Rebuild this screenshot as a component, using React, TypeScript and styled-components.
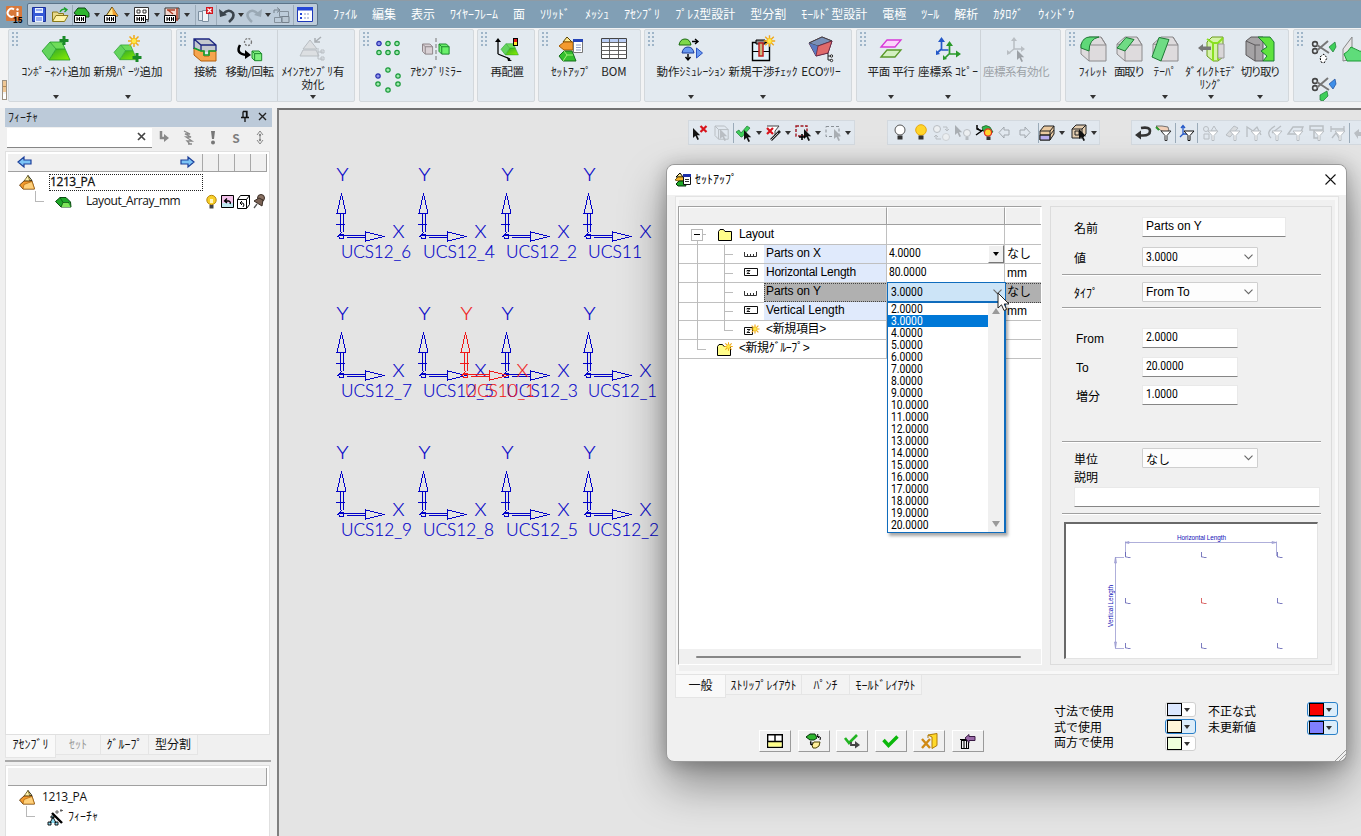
import React from "react";
import styled, { createGlobalStyle, css } from "styled-components";

const UI = `"Open Sans", "Noto Sans CJK JP", sans-serif`;
const CJK = `"Noto Sans CJK JP", "Open Sans", sans-serif`;
const GOTHIC = `"Liberation Sans", "Noto Sans CJK JP", sans-serif`;

const Global = createGlobalStyle`
  * { box-sizing: border-box; }
  html, body { margin: 0; padding: 0; overflow: hidden; }
  body { font-family: ${CJK}; font-size: 12px; color: #1e1e1e; background: #f0f0f0; }
  svg { display: block; flex: none; overflow: visible; }
`;

/* ---------- icons ---------- */

type IconName = keyof typeof art;

const Funnel = ({ c = "#333", x = 5, y = 6 }: { c?: string; x?: number; y?: number }) => (
  <path d={`M${x} ${y}h10l-4 4.500v5h-2v-5z`} fill="#fff" stroke={c} />
);
const Cursor = ({ x, y, c = "#111" }: { x: number; y: number; c?: string }) => (
  <path d={`M${x} ${y}v10l2.400-2.200 2 4.200 1.600-.8-2-4h3.200z`} fill={c} />
);
const Hist = () => (
  <>
    <path d="M.5 8.500h11v7H.5z" fill="#fff" stroke="#000" />
    <path d="M3 10v4M3 12h2M5.500 10v4M7.500 10v4M7.500 12h2M9.500 10v4" stroke="#000" fill="none" />
  </>
);
const Sun = ({ x, y, s = 1 }: { x: number; y: number; s?: number }) => (
  <g transform={`translate(${x} ${y}) scale(${s})`}>
    <path d="M0-6V6M-6 0H6M-4.500-4.500l9 9M-4.500 4.500l9-9" stroke="#f0a81c" strokeWidth="1.500" />
    <circle r="2.700" fill="#ffe94a" stroke="#f5c320" />
  </g>
);
const Block = () => (
  <>
    <defs>
      <linearGradient id="blockFront" x1="0" y1="0" x2="1" y2="1">
        <stop offset="0" stopColor="#2ea82a" />
        <stop offset="1" stopColor="#8cf000" />
      </linearGradient>
    </defs>
    <path d="M8 6h12l3 7h-9z" fill="#6fdc5a" />
    <path d="M14 13h9l5 11H7z" fill="url(#blockFront)" />
    <path d="M0 15 8 6l6 7-7 11z" fill="#63d45c" />
    <path d="M0 15 8 6h12l8 18H7zM8 6l6 7-7 11M14 13h9" fill="none" stroke="#1e9a26" strokeWidth=".8" />
  </>
);
const Cube = ({ x = 0, y = 0, s = 1, f = "#5be05b", e = "#1c8a2c" }: { x?: number; y?: number; s?: number; f?: string; e?: string }) => (
  <g transform={`translate(${x} ${y}) scale(${s})`}>
    <path d="M0 0h8l3 3v8H3L0 8z" fill={f} stroke={e} strokeWidth={1 / s} />
    <path d="M0 0l3 3h8M3 3v8" fill="none" stroke={e} strokeWidth={1 / s} />
  </g>
);
const Solid = ({ children }: { children?: React.ReactNode }) => (
  <>
    <path d="M1 8 9 1h12l5 8v16H9L1 18z" fill="#dedbdd" stroke="#8c8a8c" />
    <path d="M9 9h17M9 9v16M9 9 1 8M21 1l5 8" stroke="#8c8a8c" fill="none" />
    {children}
  </>
);
const Scissors = () => (
  <g fill="none">
    <circle cx="3" cy="4" r="2.400" stroke="#444" strokeWidth="1.600" />
    <circle cx="3" cy="11" r="2.400" stroke="#444" strokeWidth="1.600" />
    <path d="M5 5l12 8M5 10.500 16 1" stroke="#777" strokeWidth="2" />
  </g>
);
const Pyramid = () => (
  <>
    <path d="M9 .5l4 5-7 1z" fill="#ffef8a" stroke="#000" strokeWidth=".8" />
    <path d="M9 .5l-4 5.500 6 .5z" fill="#fff3b0" stroke="#5a4a10" strokeWidth=".7" />
    <path d="M.5 10l4.500-4h8l2.500 8H4z" fill="#f39a2e" stroke="#4a2800" strokeWidth=".8" />
    <path d="M5 9.500l8-3 2.500 7.500H4z" fill="#ffd07a" stroke="#a55a00" strokeWidth=".6" />
  </>
);
const SmallBlock = () => (
  <>
    <path d="M.5 7.500 5 3.500h6l4.500 4.500.5 5H6z" fill="#1ea828" stroke="#0a4a10" />
    <path d="M8 8.500h5l2.500 4.500H6.500z" fill="#7fe35a" />
    <path d="M5 3.500l3 5-2 4.500M8 8.500h6" stroke="#0a4a10" fill="none" strokeWidth=".7" />
  </>
);
const BoxFeature = () => (
  <>
    <path d="M1 6 5 1h10v8l-4 6H1z" fill="#e9c9a0" stroke="#222" />
    <path d="M1 10h10v5H1z" fill="#b9aef0" stroke="#222" />
    <path d="M1 6h10v9M11 6l4-5M1 10h10l4-5" stroke="#222" fill="none" />
  </>
);
const g = "#b9bec3";

const art = {
  app: [18, 18, <><rect x="0" y="0" width="16" height="15" rx="1" fill="#d8783a" /><path d="M8 3.500A4 4 0 1 0 8 10M11.500 6v4" stroke="#fff" strokeWidth="2" fill="none" /><circle cx="11.500" cy="3.500" r="1.200" fill="#fff" /><text x="7" y="17" fontSize="8.500" fontWeight="700" fontFamily="Liberation Sans">15</text></>],
  save: [14, 15, <><path d="M.5.500h13v14H.5z" fill="#3559d6" stroke="#1b2f9a" /><rect x="3" y="1" width="8" height="5" fill="#e8f0ff" /><rect x="3" y="9" width="8" height="6" fill="#e8f0ff" /><path d="M4 3h6M4 11h6M4 13h6" stroke="#4a6ae0" /></>],
  open: [17, 16, <><path d="M.5 14V5h5l1 1.500h5V9" fill="#e8d98a" stroke="#8a7a1a" /><path d="M.5 14.500 4 8.500h12l-3.500 6z" fill="#fff3a8" stroke="#8a7a1a" /><path d="M8 5q2-4 6-2.500M12 .5l3 2-2.500 2.500" stroke="#1aa02a" fill="none" strokeWidth="1.300" /></>],
  histA: [16, 16, <><path d="M0 6 4 1h7l4 5v4H5z" fill="#2eb52e" stroke="#0b4a12" /><Hist /></>],
  histB: [16, 16, <><path d="M8 0l6 9H2z" fill="#ffe58a" stroke="#5a4200" /><path d="M8 0l6 9H9z" fill="#f0a030" /><Hist /></>],
  histC: [16, 16, <><path d="M.5.500h14v12H.5z" fill="#fff" stroke="#333" /><path d="M3 3h3v3H3zM9 3h3v3H9zM14 12v3" stroke="#333" fill="none" /><Hist /></>],
  histD: [16, 16, <><path d="M1 1h14v11H1z" fill="#f3d9d0" stroke="#333" /><path d="M3 3h8M4 3l5 4M13 1v13" stroke="#b0412a" fill="none" strokeWidth="1.500" /><Hist /></>],
  copyX: [17, 17, <><path d="M1.500 5.500h6v9h-6z" fill="#dfe8f0" stroke="#7c8fa0" /><path d="M5.500 4.500h6v11h-6z" fill="#eef3f7" stroke="#7c8fa0" /><rect x="9" y="1" width="7" height="7" fill="#d4141c" /><path d="M10.500 2.500l4 4M14.500 2.500l-4 4" stroke="#fff" strokeWidth="1.200" /></>],
  undo: [16, 16, <><path d="M4 7q6-6 10-1 2 4-4 9" fill="none" stroke="#3b444c" strokeWidth="2.600" /><path d="M0 2l1 8 7-2z" fill="#3b444c" /></>],
  redo: [16, 16, <><path d="M12 7Q6 1 2 6q-2 4 4 9" fill="none" stroke="#9aa8b4" strokeWidth="2.600" /><path d="M16 2l-1 8-7-2z" fill="#9aa8b4" /></>],
  swap: [17, 16, <><path d="M6.500 4.500h9v5h-9zM1.500 10.500h7v5h-7z" fill="none" stroke="#84909b" /><path d="M9 9.500h7v6H9z" fill="#b9c6d2" stroke="#75818c" /><path d="M1 6V3h5M4 .5l3 2.500-3 2.500" stroke="#75818c" fill="none" /></>],
  list: [16, 15, <><path d="M.5.500h15v14H.5z" fill="#fff" stroke="#1d38b8" /><path d="M0 0h16v3.500H0z" fill="#2345d6" /><path d="M3 7h2M3 11h2" stroke="#2345d6" strokeWidth="2" /><path d="M7 7h6M7 11h6" stroke="#8896c8" strokeDasharray="2 1" /></>],

  addComp: [28, 26, <><Block /><path d="M22 0v9M17.500 4.500h9" stroke="#1a8a28" strokeWidth="3" /></>],
  newPart: [28, 26, <><g transform="translate(0 4) scale(.82)"><Block /></g><Sun x={20} y={5} /><path d="M23 17v9M18.500 21.500h9" stroke="#1a8a28" strokeWidth="3" /></>],
  connect: [24, 25, <><path d="M1 2h15l7 6v7H8L1 11z" fill="#c4c8ce" /><path d="M1 11l7 3h3v5h5v-5h7v10H8l-7-6z" fill="#f6a54e" stroke="#b45c08" /><path d="M1 12V2h15l7 6v6M1 2l7 6h15M8 8v6" stroke="#1b2580" fill="none" strokeWidth="1.300" /><path d="M1 11l7 3h3v4h5v-4h7" stroke="#12a030" strokeWidth="1.600" fill="none" /></>],
  move: [25, 25, <><circle cx="11" cy="5" r="3.500" fill="none" stroke="#777" strokeWidth="1.300" strokeDasharray="2 1.300" /><path d="M3 8Q-2 17 10 18" stroke="#000" strokeWidth="2.500" fill="none" /><path d="M8 13l6 5-6 4z" /><Cube x={15} y={14} s={0.880} f="#7ef07e" /></>],
  mainAsm: [26, 26, <><path d="M3 13 10 4l7 9zM0 20l3-6h13l3 6z" fill="#dcdfe2" stroke={g} /><path d="M21 1l-6 5M15 2v4h5" stroke="#a9aeb3" strokeWidth="1.500" fill="none" /><path d="M18 12v11h5M18 16h5M21 14h3v3h-3zM21 21h3v3h-3z" stroke={g} fill="none" /></>],
  gridPat: [24, 16, <>{[0, 1, 2].map(i => [0, 1].map(j => <circle key={`${i}${j}`} cx={3 + i * 9} cy={3.500 + j * 9} r="2.200" fill={i + j ? "#9fe8ae" : "#8f94e8"} stroke={i + j ? "#1a9a3a" : "#2a30b0"} strokeWidth="1.200" />))}</>],
  circPat: [24, 26, <>{[[12, 3], [22, 9], [22, 17], [12, 23], [2, 17], [2, 9]].map(([x, y], i) => <circle key={i} cx={x} cy={y} r="2.200" fill={i < 5 ? "#9fe8ae" : "#8f94e8"} stroke={i < 5 ? "#1a9a3a" : "#2a30b0"} strokeWidth="1.200" />)}</>],
  mirror: [28, 26, <><Cube x={.5} y={8} s={0.920} f="#d8d0d4" e="#8f868a" /><Cube x={17} y={8} s={0.920} f="#6af06a" /><path d="M14 2v22" stroke="#777" strokeDasharray="4 2" /></>],
  relocate: [24, 25, <><path d="M3 17V3M3 17l12 5" stroke="#000" fill="none" strokeWidth="1.300" /><path d="M0 5l3-4 3 4zM13 24l-1-4 5 4z" /><g transform="translate(6 3) scale(.62)"><Block /></g><rect x="18.500" y="1.500" width="4" height="7" fill="#ffe62a" stroke="#000" /><rect x="19" y="2" width="3" height="3" fill="#e01818" /></>],
  setup: [25, 26, <><path d="M8 1l5 5H4z" fill="#ffe98a" stroke="#5a4200" /><path d="M0 10l5-4h9v8H5z" fill="#f39a2e" stroke="#a55a00" /><path d="M0 20l5-5h8l4 10H4z" fill="#35c02e" stroke="#14701c" /><path d="M5 15l3 4-4 6M8 19h6" stroke="#a5f07a" fill="none" /><path d="M14.500 3.500h9v13h-9z" fill="#fff" stroke="#777" /><path d="M14 3h10v3H14z" fill="#2545b8" /><path d="M17 9h5M17 11.500h5M17 14h5" stroke="#8fa0c8" /></>],
  bom: [26, 22, <><path d="M.5.500h25v20H.5z" fill="#fff" stroke="#444" /><path d="M1 1h24v3.500H1z" fill="#b9cdf5" /><path d="M0 4.500h26M0 8.500h26M0 12.500h26M0 16.500h26M8.500 0v21M17.500 0v21" stroke="#555" strokeWidth=".9" /></>],
  motion: [26, 24, <><path d="M1 8q1-6 6-6t6 6z" fill="#7fd84a" stroke="#1a6a10" /><path d="M14 4.500h5M17 2l3 2.500L17 7" stroke="#000" fill="none" strokeWidth="1.400" /><path d="M4 16q1-6 6-6t6 6z" fill="#6a9af0" stroke="#1a3a9a" /><path d="M18.500 11l6 5-6 5z" fill="#6a9af0" stroke="#2a50c0" /><path d="M10 17v5M7.500 20l2.500 3 2.500-3" stroke="#000" fill="none" strokeWidth="1.400" /></>],
  interfere: [25, 26, <><path d="M1.500 6.500h17v18h-17z" fill="#dff2fb" stroke="#000" strokeWidth="1.400" /><path d="M1 15.500h17.500M5 4h9v4H5z" fill="#888" stroke="#000" /><path d="M8 7h4v13H8z" fill="#c8b880" stroke="#c02020" strokeWidth="1.500" /><Sun x={18.500} y={5} s={0.950} /></>],
  eco: [26, 26, <><path d="M1 7 14 1l10 4-4 12-12 3z" fill="#c8506a" stroke="#5a2040" /><path d="M1 7 14 1l10 4-14 5z" fill="#7a90b8" stroke="#444" /><path d="M10 10l-2 10L1 7z" fill="#5a7ac0" /><path d="M10 10 24 5l-4 12-12 3z" fill="#e06a6a" stroke="#5a2040" strokeWidth=".7" /><path d="M20 17v7h4M20 20h4" stroke="#222" fill="none" /><circle cx="23.500" cy="20" r="1.200" fill="#fff" stroke="#222" /><circle cx="23.500" cy="24.500" r="1.200" fill="#fff" stroke="#222" /></>],
  planes: [22, 22, <><path d="M1 9 7 2h14l-6 7z" fill="#fbd3fb" stroke="#d838d8" strokeWidth="1.300" /><path d="M1 19l6-7h14l-6 7z" fill="#d3f0c0" stroke="#5a9a2a" strokeWidth="1.300" /></>],
  csCopy: [26, 24, <><path d="M6.500 13V2M6.500 13h7M6.500 12 2 16" stroke="#2458c8" strokeWidth="1.700" fill="none" /><path d="M3 5l3.500-5L10 5zM1 18v-5l4 4z" fill="#2458c8" /><path d="M14.500 17V7M14.500 17h9M14.500 16.500 10 21" stroke="#2a9a2a" strokeWidth="1.700" fill="none" /><path d="M11 9l3.500-5L18 9zM21 13.500l5 3.500-5 3.500zM8 23v-5l4 4z" fill="#2a9a2a" /></>],
  csAct: [20, 25, <><path d="M8 12V2M8 12h9M8 12l-5 4" stroke={g} strokeWidth="1.500" fill="none" /><path d="M5 4l3-4 3 4zM15 9l4 3-4 3zM1 18v-5l4 3z" fill={g} /><Cursor x={11} y={13} c="#9ca1a6" /></>],
  fillet: [27, 26, <Solid><path d="M1 9Q3 1 10 1h9Q9 3 9 15L1 12z" fill="#5fd878" stroke="#1d7a34" /></Solid>],
  chamfer: [27, 26, <Solid><path d="M1 12 10 1.500l8 2L9 15z" fill="#6fdc84" stroke="#1d7a34" /></Solid>],
  taper: [27, 26, <Solid><path d="M0 21 7 1.500l10 2L9 25z" fill="#6fdc84" stroke="#1d7a34" /></Solid>],
  direct: [26, 26, <><path d="M9 6l5-5h11v20l-5 4h-5l-6-5z" fill="#d4f3a8" stroke="#6a9a1a" /><path d="M9 3l6 4h5l5-5M15 7v18M20 7v17" stroke="#8ae020" fill="none" strokeWidth="2" /><path d="M20 8h6v14h-6z" fill="#d9d6d8" stroke="#999" /><path d="M0 12l5-4v2.500h8v3.500H5V16z" fill="#777" /></>],
  cut: [28, 26, <><path d="M0 5 5 1h12v24H9L0 19z" fill="#a5a3a5" stroke="#5c5a5c" /><path d="M0 5l9 4v16M9 9h5" stroke="#5c5a5c" fill="none" /><path d="M12 1h12l4 5v19H17l4-5-6-5 6-4-4-5z" fill="#5fe33e" stroke="#1d7a34" /></>],
  sciA: [25, 26, <><Scissors /><path d="M17 7l6-5 1 5-3 5z" fill="#3fcf5a" stroke="#1d7a34" strokeWidth=".7" /><path d="M8 17l4-3 3 4-3 5-3-1z" fill="#fff" stroke="#000" strokeDasharray="2 1.500" /></>],
  sciB: [25, 26, <><Scissors /><path d="M17 7l6-5 1 5-3 5z" fill="#3f8fe8" stroke="#1d4a9a" strokeWidth=".7" /><path d="M8 18l7-4 1 5-5 5-3-1z" fill="#3fcf5a" stroke="#1d7a34" strokeWidth=".7" /></>],
  surf: [27, 26, <><path d="M1 13 10 1v22l-9 2z" fill="#e6e4e6" stroke="#888" /><path d="M2 18q4-2 7-7 8 5 18 6l-3 8H5z" fill="#5fdc7a" stroke="#1d9a34" /></>],

  curX: [16, 16, <><Cursor x={1} y={3} /><path d="M8.500 1l6 6M14.500 1l-6 6" stroke="#d8141c" strokeWidth="2.200" /></>],
  cubeSel: [15, 16, <><Cube x={1} y={1} s={1.200} f="none" e={g} /><Cursor x={6} y={4} c={g} /></>],
  checkSel: [16, 16, <><path d="M0 7l3-2 2 3 6-7 3 2-8 9H5z" fill="#3fcf5a" stroke="#1d7a34" strokeWidth=".7" /><Cursor x={8} y={5} /></>],
  pickX: [16, 16, <><path d="M1 1h12l-4 5v4" fill="#fff" stroke="#444" /><path d="M1 3l6 6M7 3l-6 6" stroke="#d8141c" strokeWidth="2.200" /><path d="M5 15l9-9" stroke="#222" strokeWidth="2.600" /><path d="M5 15l7-7" stroke="#bbb" /></>],
  boxPlus: [17, 16, <><path d="M1 1h11v10H1z" fill="none" stroke="#a01822" strokeWidth="1.400" strokeDasharray="3 1.500" /><Cursor x={9} y={4} /><path d="M7 9v6M4 12h6" stroke="#000" strokeWidth="1.600" /></>],
  boxSel: [16, 16, <><path d="M1 1.500h13v10H1z" fill="none" stroke="#8a9096" strokeDasharray="3 2" /><Cursor x={9} y={4} c="#a9aeb3" /></>],
  bulbOff: [12, 17, <><circle cx="6" cy="6" r="5" fill="#fff" stroke="#555" /><path d="M3.500 11.500h5v4h-5z" fill="#333" /></>],
  bulbOn: [12, 17, <><circle cx="6" cy="6" r="5.300" fill="#ffd52a" stroke="#e8a80c" /><path d="M3.500 11.500h5v4h-5z" fill="#333" /></>],
  bulbSwap: [17, 16, <><circle cx="4" cy="4" r="3.500" fill="#eceff1" stroke={g} /><circle cx="13" cy="12" r="3.500" fill="#eceff1" stroke="#ced2d6" /><path d="M10 2h4v4M12 4l2 2 2-2M8 14H3v-4M1 12l2-2 2 2" stroke={g} fill="none" /></>],
  bulbCur: [16, 16, <><Cursor x={0} y={0} c="#a9aeb3" /><circle cx="12" cy="8" r="3.500" fill="#eceff1" stroke={g} /><path d="M10.500 12h3v3h-3z" fill={g} /></>],
  bulbCol: [17, 17, <><path d="M6 3q4-3 8 0l3 5-4 2-6-3z" fill="#2eb54a" stroke="#0b4a12" strokeWidth=".6" /><circle cx="12" cy="8.500" r="3.600" fill="#ffd52a" stroke="#e03020" strokeWidth="1.300" /><path d="M10.500 12.500h4v3.500h-4z" fill="#333" /><path d="M1 1v4l5 2M0 11l7-5M1 5h2" stroke="#000" fill="none" strokeWidth="1.500" /></>],
  left: [12, 13, <path d="M1 6.500 6 1v3h5v5H6v3z" fill="none" stroke="#a2a8ae" />],
  right: [12, 13, <path d="M11 6.500 6 1v3H1v5h5v3z" fill="none" stroke="#a2a8ae" />],
  boxF: [16, 16, <BoxFeature />],
  boxC: [17, 17, <><path d="M1 5 5 1h10v9l-4 4H1z" fill="#e3cdb0" stroke="#222" /><path d="M1 5h10v9M11 5l4-4" stroke="#222" fill="none" /><path d="M4 7h4v4H4z" fill="none" stroke="#222" /><Cursor x={8} y={5} /></>],
  ret: [16, 14, <><path d="M4 9.500h4q7 0 7-4.500T6 2" fill="none" stroke="#333" strokeWidth="2.600" /><path d="M0 9l6-4.500v9z" fill="#333" /></>],
  fHand: [16, 16, <><path d="M0 1h6l6 1 1 4-5 1-4-2z" fill="#f2d0b8" stroke="#555" strokeWidth=".8" /><path d="M0 2l3 3" stroke="#2a9a2a" strokeWidth="2" /><Funnel /></>],
  fAxis: [16, 16, <><path d="M4 9V1M4 9h6M4 9l-3 3M2 3l2-2.500L6 3M9 7l2 2-2 2" stroke="#2458c8" fill="none" strokeWidth="1.300" /><Funnel c="#111" /></>],
  f1: [16, 16, <><circle cx="3" cy="4" r="2.500" fill="none" stroke={g} /><path d="M8 6l3-5 3 5zM1 9h5v5H1z" fill="none" stroke={g} /><Funnel c={g} /></>],
  f2: [16, 16, <><path d="M1 10 9 1l4 2-8 9z" fill="#d9dcdf" stroke={g} /><Funnel c={g} /></>],
  f3: [16, 16, <><path d="M1 12V2l6 4 4-4 4 8" fill="none" stroke={g} strokeWidth="1.300" /><Funnel c={g} /></>],
  f4: [16, 16, <><path d="M8 1Q-2 7 4 13M14 1 5 8" fill="none" stroke={g} strokeWidth="1.300" /><Funnel c={g} /></>],
  f5: [16, 16, <><path d="M0 9l5-7h10l-3 7z" fill="none" stroke={g} strokeWidth="1.300" /><Funnel c={g} /></>],
  f6: [16, 16, <><path d="M1 1h13v4H1zM5 5v8h4" fill="none" stroke={g} strokeWidth="1.500" /><Funnel c={g} /></>],
  f7: [16, 16, <><path d="M1 1v6M14 1v6M1 4h13M2 13l4-5 3 5" fill="none" stroke={g} strokeWidth="1.300" /><Funnel c={g} /></>],
  f8: [16, 16, <><path d="M0 8l5-4v3h5v4H4v3z" fill={g} /></>],

  pin: [10, 11, <path d="M3 .5h4v6M3 .5v6M1 6.500h8M5 7v4M6.500 1v5" stroke="#111" fill="none" strokeWidth="1.300" />],
  x: [9, 9, <path d="M1 1l7 7M8 1 1 8" stroke="#222" strokeWidth="1.400" />],
  xs: [9, 9, <path d="M1 1l7 7M8 1 1 8" stroke="#444" strokeWidth="1.700" />],
  xl: [11, 11, <path d="M.5.500l10 10M10.500.500l-10 10" stroke="#111" strokeWidth="1.100" />],
  sub: [10, 13, <><path d="M2 0v7h4" stroke="#888" strokeWidth="2.500" fill="none" /><path d="M5 3l5 4-5 4z" fill="#888" /></>],
  spring: [10, 15, <path d="M1 1l6 3-5 0 6 3-5 0 6 4-5 0 3 3M9 14l-4 0" stroke="#8a8a8a" strokeWidth="1.300" fill="none" />],
  bang: [6, 15, <><path d="M1 1h4l-1 8H2z" fill="#777" /><circle cx="3" cy="12.500" r="2" fill="#777" /></>],
  tail: [8, 16, <><path d="M4 5v5M1 5l3-4 3 4M1 10l3 4 3-4" stroke="#888" fill="none" /><circle cx="4" cy="5" r="1.200" fill="#888" /><circle cx="4" cy="10" r="1.200" fill="#888" /></>],
  arrL: [15, 12, <path d="M1 6l6-5v3h7v4H7v3z" fill="#7cc4f6" stroke="#1c3f9a" strokeWidth="1.200" />],
  arrR: [15, 12, <path d="M14 6 8 1v3H1v4h7v3z" fill="#7cc4f6" stroke="#1c3f9a" strokeWidth="1.200" />],
  pyr: [16, 15, <Pyramid />],
  comp: [16, 15, <SmallBlock />],
  bulb: [11, 14, <><circle cx="5.500" cy="5" r="4.700" fill="#f7cf2a" stroke="#b8860b" /><path d="M4 4h3v4H4z" fill="#fff6c0" /><path d="M3.500 10h4v3.500h-4z" fill="#444" /></>],
  flag: [13, 13, <><path d="M.5.500h12v12H.5z" fill="#f4c4ec" stroke="#000" /><path d="M1 8h11v4H1z" fill="#bfe8f0" /><path d="M4 6h4q2 1 1 3M6 3.500 3.500 6 6 8" stroke="#000" fill="none" strokeWidth="1.300" /></>],
  cubeB: [13, 14, <><path d="M.5 4.500 3.500.500h9v9l-3 4h-9z" fill="#fff" stroke="#000" /><path d="M.5 4.500h9v9M9.500 4.500l3-4M3 8h3q2 2 0 4M5 6 3 8l2 2" stroke="#000" fill="none" /></>],
  tack: [12, 15, <><circle cx="8" cy="4" r="3.500" fill="#8a7264" stroke="#3c2f28" /><path d="M1 7l8 5 1-6-4-2z" fill="#7a6254" stroke="#3c2f28" /><path d="M4 10 1 14" stroke="#555" strokeWidth="1.300" /></>],
  wand: [16, 16, <><path d="M5 4l10 10" stroke="#000" strokeWidth="2.400" /><path d="M3 14l3-6 3 6M1 13h3v3H1zM8 13h3v3H8zM4 7h3v2H4z" stroke="#000" fill="#8ad8ee" strokeWidth=".9" /><path d="M10 1v4M8 3h4M14 0v3M13 1.500h3" stroke="#555" strokeWidth=".9" /></>],
  winSetup: [16, 15, <><path d="M1 5l4-4 3 4z" fill="#ffe98a" stroke="#000" /><path d="M0 8l3-3h6v4H3z" fill="#f3b32e" stroke="#5a4200" strokeWidth=".8" /><path d="M1 12l3-3h5l2 5H3z" fill="#1ea828" stroke="#04330a" /><path d="M8.500 2.500h7v10h-7z" fill="#fff" stroke="#111" /><path d="M8 2h8v3H8z" fill="#1c2fa8" /><path d="M10 7.500h4M10 9.500h4" stroke="#333" /></>],
  folder: [14, 12, <><path d="M.5 11.500v-9l1.500-2h3.500l1.500 2h6.500v9z" fill="#fffd8a" stroke="#000" /></>],
  folderNew: [17, 15, <><path d="M.5 13.500v-9l1.500-2h3.500l1.500 2h6.500v9z" fill="#fffd8a" stroke="#000" /><Sun x={11.500} y={4.500} s={0.700} /></>],
  ruler: [13, 6, <path d="M.5 1v4.500h12V1M3.500 3v2.500M6.500 3v2.500M9.500 3v2.500" stroke="#333" fill="none" />],
  dim: [14, 10, <><path d="M.5.500h13v7H.5z" fill="#fff" stroke="#111" /><path d="M3 2.500h3L3 5.500h3M3 2.500v1" stroke="#111" fill="none" /></>],
  dimNew: [16, 10, <><path d="M.5 2.500h8v7H.5z" fill="#fff" stroke="#111" /><path d="M3 4.500h3L3 7.500h3" stroke="#111" fill="none" /><Sun x={11} y={4} s={0.750} /></>],
  layout: [16, 14, <><path d="M.7.700h14.600v12.600H.7z" fill="#fff" stroke="#000" strokeWidth="1.400" /><path d="M1.400 8h13.200v4.600H1.400z" fill="#ffff8a" /><path d="M1 7.500h14M8 1v6.500" stroke="#000" strokeWidth="1.400" /></>],
  regen: [16, 16, <><path d="M0 4l4-3h5l2 4-3 2H4z" fill="#2eb52e" stroke="#04330a" /><path d="M12 1l-1 2 2 2M12 3q4 1 2 4" stroke="#000" fill="none" /><path d="M6 12l2-3h6l-1 4-3 2H7z" fill="#ffef9a" stroke="#4a4200" /><path d="M5 8q-2 2 1 4M4 11l2 1V9" stroke="#000" fill="none" /></>],
  checkGo: [17, 14, <><path d="M1 4l4 5 8-8" stroke="#22b422" strokeWidth="2.600" fill="none" /><path d="M7 8v3h5" stroke="#444" strokeWidth="1.800" fill="none" /><path d="M11 7l5 4-5 3.500z" fill="#444" /></>],
  check: [17, 13, <path d="M1.500 5l5 5.500 9-9" stroke="#0bb80b" strokeWidth="3.400" fill="none" />],
  exit: [17, 16, <><path d="M7 2l9-1.500v12l-5 3V4z" fill="#ffd92a" stroke="#b07a08" /><path d="M7 2v3" stroke="#b07a08" /><path d="M1 6l8 9M9 6l-8 9" stroke="#d08a14" strokeWidth="2.400" /></>],
  trash: [15, 15, <><path d="M1.500 6.500h7v8h-7zM0 5.500h10M4 7v7M6.500 7v7" fill="#fff" stroke="#000" strokeWidth="1.100" /><path d="M5 4l4-3.500v2h6v4H9v2z" fill="#9a6aa8" stroke="#3a1a44" /></>],
  chev: [9, 6, <path d="M.5.700l4 4 4-4" fill="none" stroke="#666" strokeWidth="1.100" />],
} satisfies Record<string, [number, number, React.ReactNode]>;

const Icon = ({ n }: { n: IconName }) => {
  const [w, h, body] = art[n];
  return <svg width={w} height={h} viewBox={`0 0 ${w} ${h}`}>{body}</svg>;
};

const Arrow = styled.span<{ $c?: string }>`
  width: 0; height: 0; flex: none;
  border: 3px solid transparent;
  border-top: 4px solid ${p => p.$c || "#333"};
  border-bottom: 0;
`;

/* ---------- application frame ---------- */

const Frame = styled.div`
  width: 1361px; height: 836px; display: flex; flex-direction: column;
  background: #f0f0f0; overflow: hidden; position: relative;
`;
const TitleBar = styled.header`
  height: 28px; flex: none; display: flex; align-items: center;
  background: #819fb5; border-top: 1px solid #8f9ba5; padding-left: 6px;
`;
const QuickBar = styled.div`
  display: flex; align-items: center; height: 23px; width: 291px; margin-left: 3px;
  border: 1px solid #5c7489; border-radius: 2px; background: #bdccda;
`;
const Slot = styled.span<{ $w: number }>`
  width: ${p => p.$w}px; flex: none; display: flex; justify-content: center; align-items: center;
`;
const Rule = styled.i<{ $h?: number }>`
  width: 1px; height: ${p => p.$h || 20}px; background: ${p => (p.$h ? "#cdd3d8" : "#9babb9")}; flex: none;
`;
const Menu = styled.nav`
  display: flex; gap: 15px; margin-left: 15px; color: #fff; line-height: 26px; white-space: nowrap; margin-top: -1px;
`;
const Ribbon = styled.div`
  height: 80px; flex: none; display: flex; padding: 1px 0 5px 8px; background: #f2f3f4; position: relative;
`;
const Stub = styled.span`
  position: absolute; left: 2px; top: 52px; width: 5px; height: 20px;
  background: linear-gradient(#efc795 0 5px, #b98a50 5px 6px, #efc795 6px 11px, transparent 11px 13px, #fff 13px);
  border: 1px solid #9c9182;
`;
const Group = styled.section<{ $w: number; $gap: number }>`
  width: ${p => p.$w}px; margin-right: ${p => p.$gap}px; flex: none; display: flex; height: 73px;
  border: 1px solid #d3d8dc; border-radius: 2px; background: #e3eaf0; overflow: hidden;
`;
const Grip = styled.span<{ $w: number }>`
  width: ${p => p.$w}px; flex: none; height: 15px; margin-top: 2px;
  &::before {
    content: ""; display: block; width: 7px; height: 14px; margin-left: 3px;
    background:
      repeating-linear-gradient(#e3eaf000 0 2px, #e3eaf0 2px 4px),
      linear-gradient(90deg, #9fb5c8 0 2px, transparent 2px 4px, #9fb5c8 4px 6px, transparent 6px);
  }
`;
const Tool = styled.div<{ $w: number; $off?: boolean }>`
  width: ${p => p.$w}px; flex: none; display: flex; flex-direction: column; align-items: center;
  padding-top: 5px; position: relative; color: ${p => (p.$off ? "#9ba1a6" : "#222")};
`;
const ToolArt = styled.span`height: 28px; display: flex; align-items: center;`;
const ToolLabel = styled.span<{ $ls?: number }>`
  font: 11.500px/13px ${CJK}; white-space: pre; text-align: center; margin-top: 2px;
  letter-spacing: ${p => p.$ls || 0}px;
`;
const ToolArrow = styled(Arrow)`margin-top: auto; margin-bottom: 2px;`;
const Stack = styled.div<{ $w: number }>`
  width: ${p => p.$w}px; flex: none; display: flex; flex-direction: column; align-items: center;
  gap: 11px; padding-top: 10px;
`;

type T = { w: number; n: IconName; t: string; a?: boolean; off?: boolean; ls?: number };
const RTool = ({ w, n, t, a, off, ls }: T) => (
  <Tool $w={w} $off={off}>
    <ToolArt><Icon n={n} /></ToolArt>
    <ToolLabel $ls={ls}>{t}</ToolLabel>
    {a && <ToolArrow />}
  </Tool>
);

const Work = styled.main`flex: 1; display: flex; min-height: 0;`;

/* ---------- left side ---------- */

const Side = styled.aside`
  width: 277px; flex: none; padding-left: 5px; display: flex; flex-direction: column; background: #f0f0f0;
  margin-top: -1px;
`;
const SideTitle = styled.div`
  height: 20px; width: 267px; background: #bccad9; display: flex; align-items: center;
  padding: 0 5px 2px 3px; border-top: 1px solid #a9b6c3; flex: none; gap: 8px;
  > span { flex: 1; }
`;
const SearchRow = styled.div`
  display: flex; align-items: center; height: 21px; margin: 0 0 3px 2px; color: #7d7d7d; flex: none;
`;
const Search = styled.div`
  width: 145px; height: 20px; background: #fff; border-bottom: 1px solid #868686;
  display: flex; align-items: center; justify-content: flex-end; padding: 0 6px 1px 0;
`;
const Pane = styled.div<{ $h: number }>`
  width: 265px; height: ${p => p.$h}px; flex: none; border: 1px solid #e0e0e0; background: #fff; padding: 2px;
  display: flex; flex-direction: column;
`;
const PaneHead = styled.div`
  height: 18px; flex: none; display: flex; align-items: center; background: #f0f0f0;
  border-right: 1px solid #a0a0a0; border-bottom: 1px solid #a0a0a0; 
`;
const HeadCell = styled.span<{ $w: number }>`
  width: ${p => p.$w}px; height: 17px; border-left: 1px solid #a8a8a8; flex: none;
`;
const HeadMain = styled.span`
  flex: 1; display: flex; justify-content: space-between; align-items: center; padding: 0 7px 2px 9px;
`;
const TreeRow = styled.div<{ $pl: number; $h?: number }>`
  height: ${p => p.$h || 19}px; flex: none; display: flex; align-items: center; padding-left: ${p => p.$pl}px;
  font: 12px/18px ${UI}; letter-spacing: -.42px; color: #111; position: relative;
`;
const Focus = styled.span`
  width: 154px; height: 17px; margin-left: 14px; border: 1px dotted #222; line-height: 14px; 
  -webkit-text-stroke: .3px #111;
`;
const Elbow = styled.i<{ $x: number }>`
  position: absolute; left: ${p => p.$x}px; top: -2px; width: 9px; height: 11px;
  border-left: 1px solid #b8b8b8; border-bottom: 1px solid #b8b8b8;
`;
const RowName = styled.span<{ $ml: number; $w?: number; $f?: string }>`
  margin-left: ${p => p.$ml}px; width: ${p => (p.$w ? `${p.$w}px` : "auto")}; white-space: nowrap;
  font-family: ${p => p.$f || UI}; ${p => p.$f && "letter-spacing: 0;"} margin-top: -1px;
`;
const Tabs = styled.div<{ $drop?: number }>`
  display: flex; align-items: flex-start; flex: none;
  > span { padding-top: ${p => p.$drop || 0}px; }
`;
const Tab = styled.span<{ $w: number; $on?: boolean; $dim?: boolean }>`
  width: ${p => p.$w}px; height: ${p => (p.$on ? 23 : 20)}px; line-height: 18px;
  text-align: center; white-space: nowrap; flex: none;
  background: ${p => (p.$on ? "#f9f9f9" : "#f3f3f3")};
  color: ${p => (p.$dim ? "#9b9b9b" : "#111")};
  border: 1px solid #e5e5e5; border-top: 0; border-left: ${p => (p.$on ? "1px solid #e5e5e5" : "0")};
`;
const Splitter = styled.div`width: 266px; height: 2px; background: #a9a9a9; margin: 2px 0 3px; flex: none;`;

/* ---------- drawing area ---------- */

const Canvas = styled.section`
  flex: 1; position: relative; background: #e4e4e4; border-top: 2px solid #727272; border-left: 2px solid #808080;
  > svg { position: absolute; left: 0; top: 0; }
`;
const FloatBar = styled.div<{ $x: number; $w: number }>`
  position: absolute; left: ${p => p.$x - 279}px; top: 10px; width: ${p => p.$w}px; height: 25px;
  display: flex; align-items: center; background: #e1e8ef; border: 1px solid #d3d9df;
`;

const Ucs = ({ x, y, t, w, c = "#0000c8" }: { x: number; y: number; t: string; w: number; c?: string }) => (
  <g transform={`translate(${x} ${y})`} stroke={c} fill="none">
    <g shapeRendering="crispEdges">
      <path d="M-1.500-5V-23M1.500-5V-23M-4.500-23H4.500L0-43ZM5-1H24M5 1H24M24-4.500V4.500L43 0ZM-6-12H3M-4-1H5M2-12V-5M0-4-5 1" />
      <circle r="2.500" />
    </g>
    <g fill={c} strokeWidth=".15" fontFamily="Lato" fontWeight="300" fontSize="18">
      <text x="-5" y="-55.500" textLength="12" lengthAdjust="spacingAndGlyphs">Y</text>
      <text x="51" y="1.500" textLength="12" lengthAdjust="spacingAndGlyphs">X</text>
      <text x="-.5" y="21.500" textLength={w} lengthAdjust="spacingAndGlyphs">{t}</text>
    </g>
  </g>
);

const frames: [number, number, string, number][] = [
  [341, 236, "UCS12_6", 70], [423, 236, "UCS12_4", 72], [506, 236, "UCS12_2", 71], [588, 236, "UCS11", 54],
  [341, 375, "UCS12_7", 71], [423, 375, "UCS12_5", 71], [506, 375, "UCS12_3", 72], [588, 375, "UCS12_1", 69],
  [341, 514, "UCS12_9", 71], [423, 514, "UCS12_8", 71], [506, 514, "UCS12_5", 72], [588, 514, "UCS12_2", 71],
];

/* ---------- dialog ---------- */

const Dialog = styled.div`
  position: absolute; left: 666px; top: 164px; width: 681px; height: 598px; border-radius: 8px;
  background: #f0f0f0; border: 1px solid #9a9a9a; overflow: visible;
  box-shadow: 0 22px 46px rgba(0,0,0,.4), 0 2px 18px rgba(0,0,0,.24);
  font-family: ${GOTHIC}; color: #000; display: flex; flex-direction: column;
`;
const DialogTitle = styled.div`
  height: 30px; flex: none; background: #fff; border-radius: 8px 8px 0 0; display: flex; align-items: center;
  padding: 0 10px 1px 8px; gap: 4px; font-family: ${CJK};
  > span { flex: 1; margin-top: -2px; }
`;
const TabPage = styled.div`
  margin: 1px 7px 0 8px; height: 479px; flex: none; border: 1px solid #e3e3e3; box-shadow: inset 0 0 0 3px #f8f8f8;
  display: flex; padding: 9px 5px 0 2px; gap: 8px; align-items: flex-start;
`;
const Grid = styled.div`
  width: 364px; height: 459px; flex: none; background: #fff; border: 1px solid #a0a0a0;
  border-right-color: #fff; border-bottom-color: #fff; display: flex; flex-direction: column; position: relative;
`;
const cols = css`display: grid; grid-template-columns: 208px 118px 1fr;`;
const GHead = styled.div`
  ${cols} height: 18px; flex: none; background: #f0f0f0; border-bottom: 1px solid #a0a0a0;
  > i { border-right: 1px solid #a0a0a0; border-left: 1px solid #fff; border-top: 1px solid #fff; }
  > i:last-child { border-right: 1px solid #fff; }
`;
const GRow = styled.div<{ $h?: number }>`${cols} height: ${p => p.$h || 19}px; flex: none;`;
const cell = css`border-bottom: 1px solid #c0c0c0; border-right: 1px solid #c0c0c0; line-height: 18px; white-space: nowrap;`;
const NameCell = styled.span`${cell} display: flex; align-items: center; position: relative;`;
const Num = styled.span`
  display: inline-block; font-family: "Roboto", sans-serif; transform: scaleX(.86); transform-origin: 0 50%;
`;
const ValCell = styled.span`
  ${cell} padding-left: 2px; display: flex; justify-content: space-between; line-height: 17px;
`;
const UnitCell = styled.span<{ $sel?: boolean }>`
  ${cell} border-right: 0; padding-left: 2px;
  ${p => p.$sel && "background:#b0b0b0; border-top:1px dotted #444; border-bottom:1px dotted #444; line-height:16px;"}
`;
const NodeIcon = styled.span<{ $x: number; $w: number }>`
  margin-left: ${p => p.$x}px; width: ${p => p.$w}px; display: flex; align-items: center; flex: none;
`;
const NodeText = styled.span<{ $bg?: "blue" | "sel"; $ls?: number }>`
  flex: 1; height: 18px; line-height: 17px; padding-left: 2px; letter-spacing: ${p => p.$ls || 0}px;
  ${p => p.$bg === "blue" && "background:#e0eafc;"}
  ${p => p.$bg === "sel" && "background:#b0b0b0; border:1px dotted #444; border-right:0; height:19px; padding-left:1px; line-height:15px;"}
`;
const Line = styled.i<{ $x: number; $y: number; $w?: number; $h?: number }>`
  position: absolute; left: ${p => p.$x}px; top: ${p => p.$y}px; width: ${p => p.$w || 1}px; height: ${p => p.$h || 1}px;
  background: #bcbcbc;
`;
const Toggle = styled.span`
  width: 12px; height: 12px; margin-left: 12px; border: 1px solid #b8b8b8; background: #fff; flex: none;
  display: flex; align-items: center; justify-content: center; position: relative; z-index: 1;
  &::after { content: ""; width: 6px; height: 1px; background: #000; }
`;
const DropBtn = styled.span`
  width: 16px; height: 18px; background: #f0f0f0; border: 1px solid; border-color: #fff #777 #777 #fff;
  display: flex; align-items: center; justify-content: center;
`;
const Combo = styled.div`
  position: absolute; left: 208px; top: 75px; width: 119px; height: 21px; background: #cce4f7;
  border: 1px solid #0f6cbd; padding: 0 3px; display: flex; align-items: center; justify-content: space-between;
  border-width: 1px 1px 2px;
`;
const Drop = styled.div`
  position: absolute; left: 208px; top: 96px; width: 119px; height: 230px; background: #fff; z-index: 2;
  border: 1px solid #0f6cbd; border-top: 0; border-right-width: 2px; display: flex; box-shadow: 2px 3px 3px rgba(0,0,0,.35);
`;
const Options = styled.div`flex: 1;`;
const Option = styled.div<{ $on?: boolean }>`
  height: 12px; line-height: 12px; padding-left: 3px;
  ${p => p.$on && "background:#0078d7; color:#fff;"}
`;
const ScrollY = styled.div`
  width: 16px; background: #f0f0f0; display: flex; flex-direction: column; justify-content: space-between;
  align-items: center; padding: 5px 0 5px;
`;
const Tri = styled.i<{ $up?: boolean }>`
  border: 4px solid transparent; ${p => (p.$up ? "border-bottom: 6px solid #9a9a9a; border-top: 0;" : "border-top: 6px solid #9a9a9a; border-bottom: 0;")}
`;
const Pointer = styled.span`position: absolute; left: 318px; top: 85px; z-index: 3;`;
const ScrollX = styled.div`
  margin-top: auto; height: 15px; background: #f0f0f0; padding: 7px 20px 0 17px;
  &::after { content: ""; display: block; height: 2px; background: #868686; border-radius: 1px; }
`;

const Props = styled.div`
  width: 282px; height: 459px; flex: none; border: 1px solid #dcdcdc; padding-left: 11px; display: flex; flex-direction: column;
`;
const Field = styled.div<{ $mt: number; $pl?: number }>`
  display: flex; align-items: center; height: 20px; margin-top: ${p => p.$mt}px; padding-left: ${p => p.$pl ?? 12}px; flex: none;
  > label { width: ${p => 80 - (p.$pl ?? 12)}px; white-space: nowrap; padding-top: 1px; }
`;
const Box = styled.span<{ $w: number }>`
  width: ${p => p.$w}px; height: 20px; background: #fff; border: 1px solid #e9e9e9; border-bottom-color: #868686;
  padding-left: 3px; line-height: 16px; 
`;
const Select = styled.span<{ $w: number }>`
  width: ${p => p.$w}px; height: 20px; background: #fdfdfd; border: 1px solid #cfcfcf; border-radius: 1px;
  padding: 0 4px 0 3px; display: flex; align-items: center; justify-content: space-between;
`;
const Hr = styled.i<{ $mt: number }>`
  width: 259px; height: 2px; margin-top: ${p => p.$mt}px; background: #a0a0a0; border-bottom: 1px solid #fff; flex: none;
`;
const Preview = styled.div`
  width: 254px; height: 137px; margin: 7px 0 0 2px; background: #fff; flex: none;
  border: 2px solid #696969; border-right: 1px solid #e3e3e3; border-bottom: 1px solid #e3e3e3;
`;
const Foot = styled.div`display: flex; padding: 0 8px 0 92px; flex: 1; font-family: ${GOTHIC};`;
const Actions = styled.div`display: flex; gap: 6.600px; margin-top: 32px; width: 295px; flex: none;`;
const ActBtn = styled.span`
  width: 32px; height: 22px; border: 1px solid; border-color: #fff #9a9a9a #9a9a9a #fff; flex: none;
  display: flex; align-items: center; justify-content: center;
`;
const Legend = styled.div<{ $w: number }>`
  display: flex; flex-direction: column; width: ${p => p.$w}px; margin-top: 7px; flex: none;
  > span { height: 15.600px; line-height: 15px; }
`;
const Swatches = styled.div<{ $gap: number; $mr: number }>`
  display: flex; flex-direction: column; gap: ${p => p.$gap}px; margin: 4px ${p => p.$mr}px 0 -1px;
`;
const Swatch = styled.span<{ $c: string; $on?: boolean }>`
  width: 31px; height: 15px; border: 1px solid ${p => (p.$on ? "#2a80c8" : "#d0d0d0")}; border-radius: 3px;
  background: ${p => (p.$on ? "#dcedfa" : "#fff")}; display: flex; align-items: center; justify-content: space-between; padding: 0 5px 0 1px;
  &::before { content: ""; width: 13px; height: 11px; border: 1px solid #000; background: ${p => p.$c}; }
`;
const SizeGrip = styled.span`position: absolute; right: 0; bottom: 0;`;

const Mark = ({ x, y, c = "#5a5ab0" }: { x: number; y: number; c?: string }) => (
  <path d={`M${x}.5 ${y - 5}v5h2M${x + 2}.5 ${y + .5}h3`} stroke={c} strokeWidth=".8" fill="none" />
);

const Item = ({ icon, name, ls, sel, children }: { icon: IconName; name: string; ls?: number; sel?: boolean; children: React.ReactNode }) => (
  <GRow>
    <NameCell>
      <Line $x={18} $y={0} $h={19} /><Line $x={45} $y={0} $h={19} /><Line $x={46} $y={9} $w={8} />
      <NodeIcon $x={65} $w={20}><Icon n={icon} /></NodeIcon>
      <NodeText $bg={sel ? "sel" : "blue"} $ls={ls}>{name}</NodeText>
    </NameCell>
    {children}
  </GRow>
);

const menus = ["ﾌｧｲﾙ", "編集", "表示", "ﾜｲﾔｰﾌﾚｰﾑ", "面", "ｿﾘｯﾄﾞ", "ﾒｯｼｭ", "ｱｾﾝﾌﾞﾘ", "ﾌﾟﾚｽ型設計", "型分割", "ﾓｰﾙﾄﾞ型設計", "電極", "ﾂｰﾙ", "解析", "ｶﾀﾛｸﾞ", "ｳｨﾝﾄﾞｳ"];

// Each entry is [slot width, icon], where "|" is a separator and "v" a drop-down arrow.
type Strip = [number, IconName | "|" | "v"][];
const quick: Strip = [[22, "save"], [20, "open"], [4, "|"], [16, "histA"], [14, "v"], [16, "histB"], [14, "v"], [16, "histC"], [14, "v"], [16, "histD"], [13, "v"], [4, "|"], [16, "copyX"], [6, "|"], [16, "undo"], [11, "v"], [16, "redo"], [11, "v"], [17, "swap"], [7, "|"], [16, "list"]];
const barA: Strip = [[22, "curX"], [21, "cubeSel"], [3, "|"], [17, "checkSel"], [13, "v"], [17, "pickX"], [12, "v"], [18, "boxPlus"], [12, "v"], [18, "boxSel"], [11, "v"]];
const barB: Strip = [[23, "bulbOff"], [19, "bulbOn"], [22, "bulbSwap"], [21, "bulbCur"], [22, "bulbCol"], [18, "left"], [24, "right"], [3, "|"], [14, "boxF"], [16, "v"], [18, "boxC"], [12, "v"]];
const barC: Strip = [[22, "ret"], [20, "fHand"], [3, "|"], [19, "fAxis"], [3, "|"], [23, "f1"], [21, "f2"], [21, "f3"], [21, "f4"], [21, "f5"], [21, "f6"], [21, "f7"], [3, "|"], [22, "f8"]];

const Items = ({ s }: { s: Strip }) => (
  <>{s.map(([w, n], i) => <Slot key={i} $w={w}>{n === "|" ? <Rule /> : n === "v" ? <Arrow /> : <Icon n={n} />}</Slot>)}</>
);

const steps = Array.from({ length: 19 }, (_, i) => `${i + 2}.0000`);

export default function App() {
  return (
    <Frame>
      <Global />
      <TitleBar>
        <Icon n="app" />
        <QuickBar><Items s={quick} /></QuickBar>
        <Menu>{menus.map(m => <span key={m}>{m}</span>)}</Menu>
      </TitleBar>

      <Ribbon>
        <Stub />
        <Group $w={164} $gap={4}><Grip $w={11} />
          <RTool w={72} n="addComp" t="ｺﾝﾎﾟｰﾈﾝﾄ追加" a />
          <RTool w={72} n="newPart" t="新規ﾊﾟｰﾂ追加" a />
        </Group>
        <Group $w={179} $gap={4}><Grip $w={11} />
          <RTool w={34} n="connect" t="接続" ls={-0.5} />
          <RTool w={55} n="move" t="移動/回転" ls={-0.5} />
          <Rule $h={71} />
          <RTool w={70} n="mainAsm" t={"ﾒｲﾝｱｾﾝﾌﾞﾘ有\n効化"} a />
        </Group>
        <Group $w={115} $gap={3}><Grip $w={10} />
          <Stack $w={36}><Icon n="gridPat" /><Icon n="circPat" /></Stack>
          <RTool w={60} n="mirror" t="ｱｾﾝﾌﾞﾘﾐﾗｰ" />
        </Group>
        <Group $w={58} $gap={3}><Grip $w={7} />
          <RTool w={44} n="relocate" t="再配置" ls={-0.5} />
        </Group>
        <Group $w={103} $gap={3}><Grip $w={8} />
          <RTool w={48} n="setup" t="ｾｯﾄｱｯﾌﾟ" />
          <RTool w={38} n="bom" t="BOM" />
        </Group>
        <Group $w={208} $gap={4}><Grip $w={10} />
          <RTool w={72} n="motion" t="動作ｼﾐｭﾚｰｼｮﾝ" a />
          <RTool w={72} n="interfere" t="新規干渉ﾁｪｯｸ" a />
          <RTool w={44} n="eco" t="ECOﾂﾘｰ" />
        </Group>
        <Group $w={205} $gap={4}><Grip $w={9} />
          <RTool w={50} n="planes" t="平面 平行" a ls={-0.3} />
          <RTool w={64} n="csCopy" t="座標系 ｺﾋﾟｰ" a />
          <Rule $h={71} />
          <RTool w={70} n="csAct" t="座標系有効化" off ls={-0.500} />
        </Group>
        <Group $w={224} $gap={4}><Grip $w={9} />
          <RTool w={36} n="fillet" t="ﾌｨﾚｯﾄ" a />
          <RTool w={36} n="chamfer" t="面取り" ls={-1.500} />
          <RTool w={36} n="taper" t="ﾃｰﾊﾟ" a />
          <RTool w={56} n="direct" t={"ﾀﾞｲﾚｸﾄﾓﾃﾞ\nﾘﾝｸﾞ"} a />
          <RTool w={42} n="cut" t="切り取り" a ls={-1.900} />
        </Group>
        <Group $w={90} $gap={0}><Grip $w={14} />
          <Stack $w={32}><Icon n="sciA" /><Icon n="sciB" /></Stack>
          <RTool w={30} n="surf" t="" />
        </Group>
      </Ribbon>

      <Work>
        <Side>
          <SideTitle><span>ﾌｨｰﾁｬ</span><Icon n="pin" /><Icon n="x" /></SideTitle>
          <SearchRow>
            <Search><Icon n="xs" /></Search>
            <Slot $w={23}><Icon n="sub" /></Slot>
            <Slot $w={26}><Icon n="spring" /></Slot>
            <Slot $w={24}><Icon n="bang" /></Slot>
            <Slot $w={22}><b>S</b></Slot>
            <Slot $w={25}><Icon n="tail" /></Slot>
          </SearchRow>
          <Pane $h={584}>
            <PaneHead>
              <HeadMain><Icon n="arrL" /><Icon n="arrR" /></HeadMain>
              {[16, 16, 16, 16].map((w, i) => <HeadCell key={i} $w={w} />)}
            </PaneHead>
            <TreeRow $pl={11} $h={21}><Icon n="pyr" /><Focus>1213_PA</Focus></TreeRow>
            <TreeRow $pl={47} $h={17}>
              <Elbow $x={27} /><Icon n="comp" />
              <RowName $ml={15} $w={118}>Layout_Array_mm</RowName>
              <Slot $w={16}><Icon n="bulb" /></Slot><Slot $w={16}><Icon n="flag" /></Slot>
              <Slot $w={16}><Icon n="cubeB" /></Slot><Slot $w={16}><Icon n="tack" /></Slot>
            </TreeRow>
          </Pane>
          <Tabs>
            <Tab $w={51} $on>ｱｾﾝﾌﾞﾘ</Tab><Tab $w={45} $dim>ｾｯﾄ</Tab><Tab $w={48}>ｸﾞﾙｰﾌﾟ</Tab><Tab $w={49}>型分割</Tab>
          </Tabs>
          <Splitter />
          <Pane $h={80}>
            <PaneHead />
            <TreeRow $pl={11} $h={22}><Icon n="pyr" /><RowName $ml={7}>1213_PA</RowName></TreeRow>
            <TreeRow $pl={39} $h={17}><Elbow $x={18} /><Icon n="wand" /><RowName $ml={5} $f={CJK}>ﾌｨｰﾁｬ</RowName></TreeRow>
          </Pane>
        </Side>

        <Canvas>
          <svg width="1082" height="726" viewBox="279 110 1082 726">
            {frames.map(([x, y, t, w]) => <Ucs key={`${x}-${y}`} x={x + .5} y={y + .5} t={t} w={w} />)}
            <Ucs x={465.500} y={375.500} t="UCS10_1" w={70} c="#f01818" />
          </svg>
          <FloatBar $x={688} $w={167}><Items s={barA} /></FloatBar>
          <FloatBar $x={887} $w={213}><Items s={barB} /></FloatBar>
          <FloatBar $x={1131} $w={240}><Items s={barC} /></FloatBar>
        </Canvas>
      </Work>

      <Dialog>
        <DialogTitle><Icon n="winSetup" /><span>ｾｯﾄｱｯﾌﾟ</span><Icon n="xl" /></DialogTitle>
        <TabPage>
          <Grid>
            <GHead><i /><i /><i /></GHead>
            <GRow $h={20}>
              <NameCell><Line $x={18} $y={14} $h={6} /><Line $x={24} $y={9} $w={3} />
                <Toggle /><NodeIcon $x={15} $w={19}><Icon n="folder" /></NodeIcon><NodeText $ls={-0.200}>Layout</NodeText></NameCell>
              <ValCell /><UnitCell />
            </GRow>
            <Item icon="ruler" name="Parts on X" ls={-0.1}><ValCell><Num>4.0000</Num><DropBtn><Arrow $c="#000" /></DropBtn></ValCell><UnitCell>なし</UnitCell></Item>
            <Item icon="dim" name="Horizontal Length" ls={-0.250}><ValCell><Num>80.0000</Num></ValCell><UnitCell>mm</UnitCell></Item>
            <Item icon="ruler" name="Parts on Y" sel ls={-0.1}><ValCell /><UnitCell $sel>なし</UnitCell></Item>
            <Item icon="dim" name="Vertical Length" ls={-0.050}><ValCell /><UnitCell>mm</UnitCell></Item>
            <GRow>
              <NameCell><Line $x={18} $y={0} $h={19} /><Line $x={45} $y={0} $h={9} /><Line $x={45} $y={9} $w={9} />
                <NodeIcon $x={65} $w={20}><Icon n="dimNew" /></NodeIcon><NodeText $ls={-0.350}>&lt;新規項目&gt;</NodeText></NameCell>
              <ValCell /><UnitCell />
            </GRow>
            <GRow>
              <NameCell><Line $x={18} $y={0} $h={9} /><Line $x={18} $y={9} $w={9} />
                <NodeIcon $x={38} $w={20}><Icon n="folderNew" /></NodeIcon><NodeText $ls={-0.450}>&lt;新規ｸﾞﾙｰﾌﾟ&gt;</NodeText></NameCell>
              <ValCell /><UnitCell />
            </GRow>
            <Combo><Num>3.0000</Num><Icon n="chev" /></Combo>
            <Drop>
              <Options>{steps.map(s => <Option key={s} $on={s === "3.0000"}><Num>{s}</Num></Option>)}</Options>
              <ScrollY><Tri $up /><Tri /></ScrollY>
            </Drop>
            <Pointer>
              <svg width="13" height="20" viewBox="0 0 13 20"><path d="M1 1v15l3.500-3.200L7 18.500l2.600-1.100L7.200 12H12z" fill="#fff" stroke="#222" /></svg>
            </Pointer>
            <ScrollX />
          </Grid>

          <Props>
            <Field $mt={10}><label>名前</label><Box $w={144}>Parts on Y</Box></Field>
            <Field $mt={10}><label>値</label><Select $w={116}><Num>3.0000</Num><Icon n="chev" /></Select></Field>
            <Hr $mt={7} />
            <Field $mt={6}><label>ﾀｲﾌﾟ</label><Select $w={116}>From To<Icon n="chev" /></Select></Field>
            <Hr $mt={5} />
            <Field $mt={19} $pl={14}><label>From</label><Box $w={96}><Num>2.0000</Num></Box></Field>
            <Field $mt={9} $pl={14}><label>To</label><Box $w={96}><Num>20.0000</Num></Box></Field>
            <Field $mt={8} $pl={14}><label>増分</label><Box $w={96}><Num>1.0000</Num></Box></Field>
            <Hr $mt={36} />
            <Field $mt={5}><label>単位</label><Select $w={116}>なし<Icon n="chev" /></Select></Field>
            <Field $mt={-2}><label>説明</label></Field>
            <Field $mt={1}><Box $w={246} /></Field>
            <Hr $mt={6} />
            <Preview>
              <svg width="251" height="134" viewBox="0 0 251 134">
                <g fill="#1212b8" fontFamily="Liberation Sans" fontSize="6.400">
                  <text x="111" y="16" textLength="49">Horizontal Length</text>
                  <text transform="translate(47 103) rotate(-90)" textLength="42">Vertical Length</text>
                </g>
                <path d="M59.500 32V17.500M59.500 18.500h151M210.500 17.500V32M49.500 33v91M49 33.500h9M49 124.500h9M59 18.500l4-1v2zM210 18.500l-4-1v2zM49.500 33l-1 6h2zM49.500 124l-1-6h2z" stroke="#9a9ad0" strokeWidth=".8" fill="none" />
                {[59, 135, 211].map(x => [33, 79, 124].map(y => <Mark key={`${x}-${y}`} x={x} y={y} c={x === 135 && y === 79 ? "#d04040" : undefined} />))}
              </svg>
            </Preview>
          </Props>
        </TabPage>
        <Tabs $drop={2}>
          <Slot $w={8} /><Tab $w={51} $on>一般</Tab><Tab $w={76}>ｽﾄﾘｯﾌﾟﾚｲｱｳﾄ</Tab><Tab $w={48}>ﾊﾟﾝﾁ</Tab><Tab $w={72}>ﾓｰﾙﾄﾞﾚｲｱｳﾄ</Tab>
        </Tabs>
        <Foot>
          <Actions>
            {(["layout", "regen", "checkGo", "check", "exit", "trash"] as IconName[]).map(n => <ActBtn key={n}><Icon n={n} /></ActBtn>)}
          </Actions>
          <Legend $w={112}><span>寸法で使用</span><span>式で使用</span><span>両方で使用</span></Legend>
          <Swatches $gap={2} $mr={12}>
            <Swatch $c="#dce8ff"><Arrow /></Swatch><Swatch $c="#fff6d8" $on><Arrow /></Swatch><Swatch $c="#efffdc"><Arrow /></Swatch>
          </Swatches>
          <Legend $w={100}><span>不正な式</span><span>未更新値</span></Legend>
          <Swatches $gap={3} $mr={0}>
            <Swatch $c="#f80000" $on><Arrow /></Swatch><Swatch $c="#8080ff" $on><Arrow /></Swatch>
          </Swatches>
        </Foot>
        <SizeGrip>
          <svg width="12" height="12" viewBox="0 0 12 12"><path d="M1 12 12 1M5 12l7-7M9 12l3-3" stroke="#999" /></svg>
        </SizeGrip>
      </Dialog>
    </Frame>
  );
}
